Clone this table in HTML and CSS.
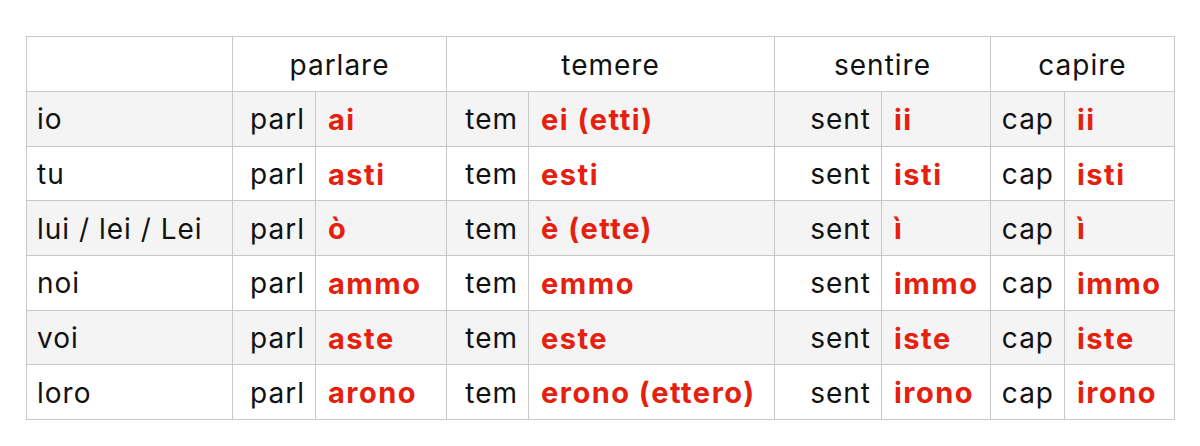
FILE: index.html
```html
<!DOCTYPE html>
<html lang="it">
<head>
<meta charset="utf-8">
<title>Passato remoto</title>
<link rel="stylesheet" href="styles.css">
</head>
<body>
<table class="conj">
  <colgroup>
    <col class="c-pron">
    <col class="c-s1"><col class="c-e1">
    <col class="c-s2"><col class="c-e2">
    <col class="c-s3"><col class="c-e3">
    <col class="c-s4"><col class="c-e4">
  </colgroup>
  <thead>
    <tr class="head">
      <th></th>
      <th colspan="2">parlare</th>
      <th colspan="2">temere</th>
      <th colspan="2">sentire</th>
      <th colspan="2">capire</th>
    </tr>
  </thead>
  <tbody>
    <tr class="alt">
      <td class="pron">io</td>
      <td class="stem">parl</td><td class="end">ai</td>
      <td class="stem">tem</td><td class="end">ei (etti)</td>
      <td class="stem">sent</td><td class="end">ii</td>
      <td class="stem">cap</td><td class="end">ii</td>
    </tr>
    <tr>
      <td class="pron">tu</td>
      <td class="stem">parl</td><td class="end">asti</td>
      <td class="stem">tem</td><td class="end">esti</td>
      <td class="stem">sent</td><td class="end">isti</td>
      <td class="stem">cap</td><td class="end">isti</td>
    </tr>
    <tr class="alt">
      <td class="pron">lui / lei / Lei</td>
      <td class="stem">parl</td><td class="end">ò</td>
      <td class="stem">tem</td><td class="end">è (ette)</td>
      <td class="stem">sent</td><td class="end">ì</td>
      <td class="stem">cap</td><td class="end">ì</td>
    </tr>
    <tr>
      <td class="pron">noi</td>
      <td class="stem">parl</td><td class="end">ammo</td>
      <td class="stem">tem</td><td class="end">emmo</td>
      <td class="stem">sent</td><td class="end">immo</td>
      <td class="stem">cap</td><td class="end">immo</td>
    </tr>
    <tr class="alt">
      <td class="pron">voi</td>
      <td class="stem">parl</td><td class="end">aste</td>
      <td class="stem">tem</td><td class="end">este</td>
      <td class="stem">sent</td><td class="end">iste</td>
      <td class="stem">cap</td><td class="end">iste</td>
    </tr>
    <tr>
      <td class="pron">loro</td>
      <td class="stem">parl</td><td class="end">arono</td>
      <td class="stem">tem</td><td class="end">erono (ettero)</td>
      <td class="stem">sent</td><td class="end">irono</td>
      <td class="stem">cap</td><td class="end">irono</td>
    </tr>
  </tbody>
</table>
</body>
</html>
```

FILE: styles.css
```css
html, body {
  margin: 0;
  padding: 0;
  background: #ffffff;
}

body {
  padding: 36px 0 0 26px;
  font-family: "Inter", "Noto Sans", "Liberation Sans", sans-serif;
  color: #111111;
}

.conj {
  border-collapse: collapse;
  table-layout: fixed;
  width: 1148px;
  font-size: 28px;
  letter-spacing: 1px;
}

.c-pron { width: 206px; }
.c-s1 { width: 83px; }
.c-e1 { width: 131px; }
.c-s2 { width: 82px; }
.c-e2 { width: 246px; }
.c-s3 { width: 107px; }
.c-e3 { width: 109px; }
.c-s4 { width: 74px; }
.c-e4 { width: 110px; }

.conj th,
.conj td {
  border: 1px solid #c8c8c8;
  padding: 1px 0 0 0;
  height: 52.7px;
  vertical-align: middle;
  white-space: nowrap;
  line-height: 1;
}

.conj th {
  font-weight: normal;
  text-align: center;
  height: 53px;
}

.conj .alt td {
  background: #f4f4f4;
}

.pron {
  text-align: left;
  padding-left: 10px !important;
}

.stem {
  text-align: right;
  padding-right: 10px !important;
}

.end {
  text-align: left;
  padding-left: 12px !important;
  color: #e6200e;
  font-size: 29px;
  font-weight: 700;
  letter-spacing: 1.5px;
}
```
